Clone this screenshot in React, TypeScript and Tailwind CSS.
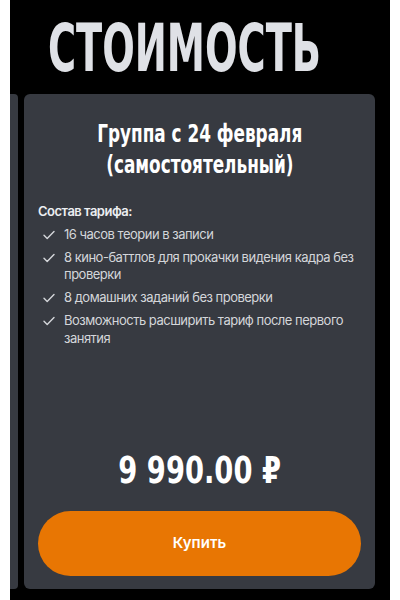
import React from "react";

const items: string[][] = [
  ["16 часов теории в записи"],
  ["8 кино-баттлов для прокачки видения кадра без", "проверки"],
  ["8 домашних заданий без проверки"],
  ["Возможность расширить тариф после первого", "занятия"],
];

function CheckIcon() {
  return (
    <svg width="12" height="10" viewBox="0 0 12 10" fill="none" className="shrink-0">
      <path d="M1 5.2 L4.2 8.4 L11 1.4" stroke="#d4d6da" strokeWidth="1.4" strokeLinecap="round" strokeLinejoin="round" />
    </svg>
  );
}

export default function App() {
  return (
    <div className="w-[400px] h-[600px] bg-white flex overflow-hidden">
      <div className="ml-[10px] w-[380px] h-full bg-black flex flex-col">
        <div className="h-[94px] pl-[38px] pt-[15px] overflow-hidden">
          <div
            className="inline-block origin-left scale-x-[0.655] text-[#dfe1e6] text-[65px] leading-[68px] font-bold whitespace-nowrap"
            style={{ fontFamily: '"DejaVu Sans Condensed", "DejaVu Sans", sans-serif' }}
          >
            СТОИМОСТЬ
          </div>
        </div>
        <div className="flex h-[495px] gap-[6px]">
          <div className="w-[8px] bg-[#373a41] rounded-r-[4px]" />
          <div className="w-[351px] bg-[#373a41] rounded-[6px] flex flex-col px-[14px] pt-[24px] pb-[13px]">
            <div
              className="text-center text-white text-[25px] leading-[31px] font-bold"
              style={{ fontFamily: '"DejaVu Sans Condensed", "DejaVu Sans", sans-serif' }}
            >
              <div className="inline-block scale-x-[0.75] whitespace-nowrap">Группа с 24 февраля</div>
              <br />
              <div className="inline-block scale-x-[0.75] whitespace-nowrap">(самостоятельный)</div>
            </div>
            <div
              className="mt-[23px] text-[13px] leading-[17.5px] tracking-[-0.5px] text-[#d4d6da]"
              style={{ fontFamily: 'Inter, "Noto Sans", sans-serif' }}
            >
              <div className="font-semibold text-[#eceef1]">Состав тарифа:</div>
              <div className="mt-[5px] flex flex-col gap-[5.5px]">
                {items.map((lines, i) => (
                  <div key={i} className="flex items-start">
                    <div className="w-[26px] shrink-0 pl-[5px] pt-[4px]">
                      <CheckIcon />
                    </div>
                    <div className="min-w-0">
                      {lines.map((l, j) => (
                        <div key={j} className="whitespace-nowrap">{l}</div>
                      ))}
                    </div>
                  </div>
                ))}
              </div>
            </div>
            <div className="mt-auto flex flex-col items-center">
              <div
                className="inline-block scale-x-[0.8] text-white text-[38px] leading-[40px] font-bold whitespace-nowrap"
                style={{ fontFamily: '"DejaVu Sans Condensed", "DejaVu Sans", sans-serif' }}
              >
                9 990.00 ₽
              </div>
              <button
                className="mt-[21px] w-full h-[65px] rounded-full bg-[#e87603] text-white text-[15px] font-semibold"
                style={{ fontFamily: 'Inter, "Noto Sans", sans-serif' }}
              >
                Купить
              </button>
            </div>
          </div>
        </div>
      </div>
    </div>
  );
}
